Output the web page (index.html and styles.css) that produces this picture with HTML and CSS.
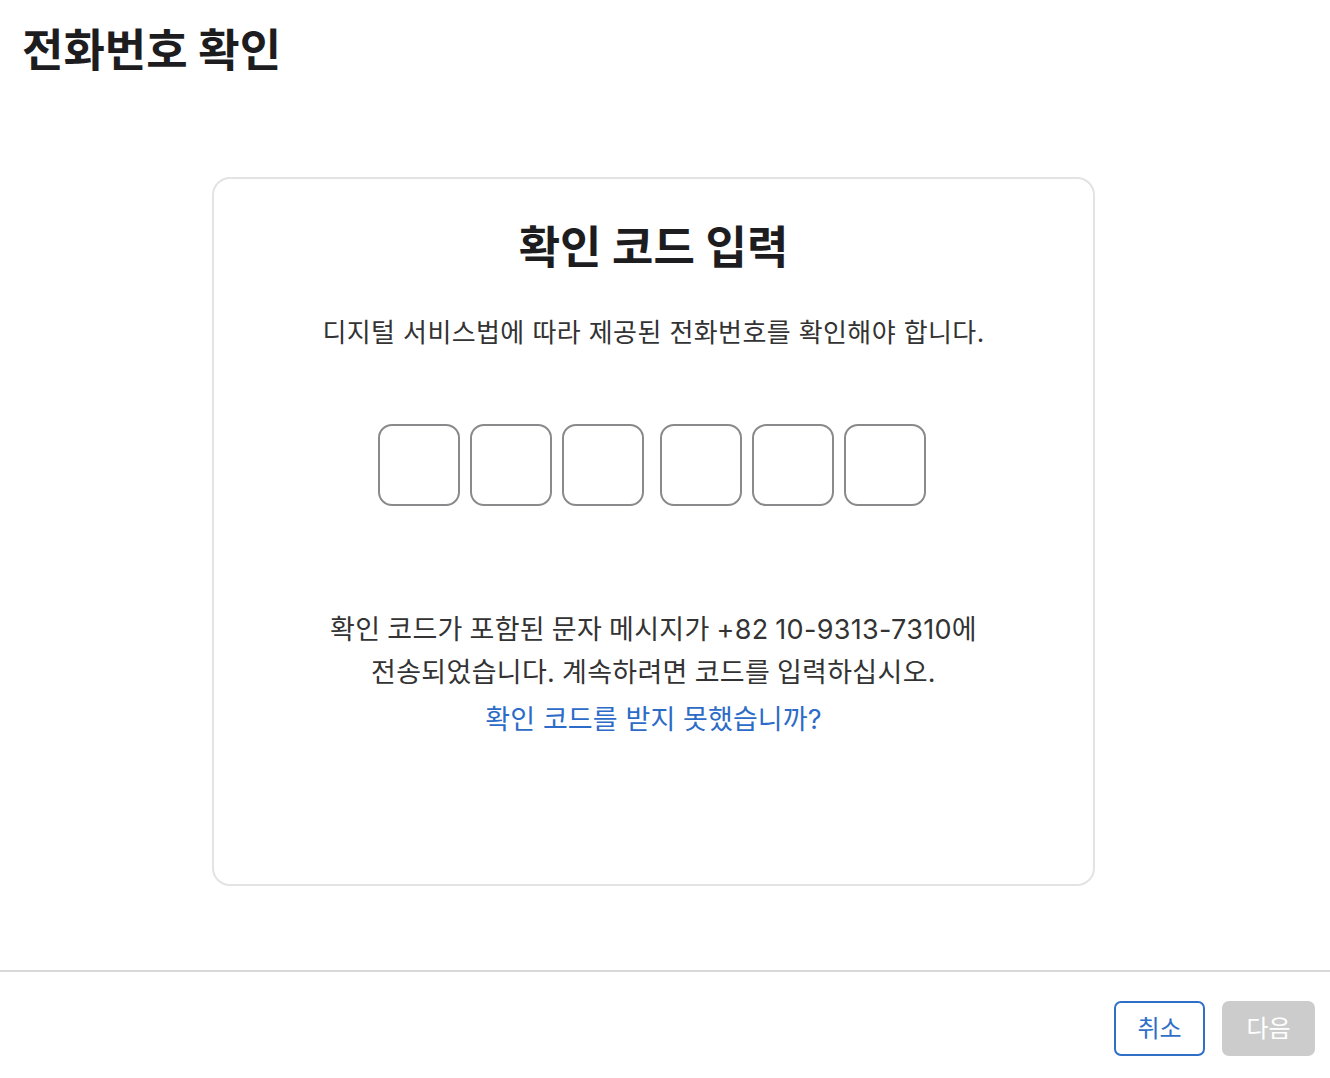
FILE: index.html
```html
<!DOCTYPE html>
<html lang="ko">
<head>
<meta charset="utf-8">
<title>전화번호 확인</title>
<link rel="stylesheet" href="styles.css">
</head>
<body>
<div class="page">
  <header class="header">
    <h1 class="page-title">전화번호 확인</h1>
  </header>
  <main class="main">
    <section class="card">
      <h2 class="card-title">확인 코드 입력</h2>
      <p class="card-desc">디지털 서비스법에 따라 제공된 전화번호를 확인해야 합니다.</p>
      <div class="code-inputs">
        <div class="code-group">
          <input class="code-box" type="text" maxlength="1" aria-label="숫자 1">
          <input class="code-box" type="text" maxlength="1" aria-label="숫자 2">
          <input class="code-box" type="text" maxlength="1" aria-label="숫자 3">
        </div>
        <div class="code-group">
          <input class="code-box" type="text" maxlength="1" aria-label="숫자 4">
          <input class="code-box" type="text" maxlength="1" aria-label="숫자 5">
          <input class="code-box" type="text" maxlength="1" aria-label="숫자 6">
        </div>
      </div>
      <p class="card-msg">확인 코드가 포함된 문자 메시지가 +82 10-9313-7310에<br>전송되었습니다. 계속하려면 코드를 입력하십시오.</p>
      <a class="card-link" href="#">확인 코드를 받지 못했습니까?</a>
    </section>
  </main>
  <footer class="footer">
    <button class="btn btn-cancel" type="button">취소</button>
    <button class="btn btn-next" type="button" disabled>다음</button>
  </footer>
</div>
</body>
</html>
```

FILE: styles.css
```css
* { box-sizing: border-box; }
html, body { margin: 0; padding: 0; background: #fff; }
body {
  font-family: Inter, "Noto Sans CJK KR", "Noto Sans", sans-serif;
  color: #1d1d1f;
}
.page {
  width: 1330px;
  height: 1078px;
  display: flex;
  flex-direction: column;
}
.header {
  padding: 21px 0 0 22px;
  height: 177px;
}
.page-title {
  margin: 0;
  font-size: 45px;
  font-weight: 700;
  line-height: 60px;
}
.main {
  height: 793px;
  padding-left: 212px;
}
.card {
  width: 883px;
  height: 709px;
  border: 2px solid #e3e3e3;
  border-radius: 18px;
  display: flex;
  flex-direction: column;
  align-items: center;
  padding-top: 37px;
}
.card-title {
  margin: 0;
  font-size: 45px;
  font-weight: 700;
  line-height: 64px;
}
.card-desc {
  margin: 35px 0 0;
  font-size: 26px;
  line-height: 36px;
  color: #333;
  letter-spacing: 0.4px;
}
.code-inputs {
  display: flex;
  gap: 16px;
  margin-top: 73px;
  margin-right: 3px;
}
.code-group {
  display: flex;
  gap: 10px;
}
.code-box {
  width: 82px;
  height: 82px;
  border: 2px solid #8a8a8c;
  border-radius: 14px;
  background: #fff;
  padding: 0;
  outline: none;
  font: inherit;
}
.card-msg {
  margin: 102px 0 0;
  text-align: center;
  font-size: 27px;
  line-height: 43px;
  color: #333;
  letter-spacing: 0.3px;
  word-spacing: -1px;
}
.card-link {
  display: block;
  margin-top: 3px;
  font-size: 27px;
  line-height: 46px;
  color: #2c6bc7;
  text-decoration: none;
  letter-spacing: 0.1px;
}
.footer {
  border-top: 2px solid #d8d8d8;
  flex: 1;
  display: flex;
  justify-content: flex-end;
  align-items: flex-start;
  gap: 17px;
  padding: 29px 15px 0 0;
}
.btn {
  font-family: inherit;
  font-size: 24px;
  height: 55px;
  border-radius: 7px;
  padding: 0 0 4px;
  cursor: pointer;
}
.btn-cancel {
  width: 91px;
  background: #fff;
  border: 2px solid #2f6fc6;
  color: #2f6fc6;
}
.btn-next {
  width: 93px;
  background: #cccccc;
  border: 2px solid #cccccc;
  color: #fff;
}
```
